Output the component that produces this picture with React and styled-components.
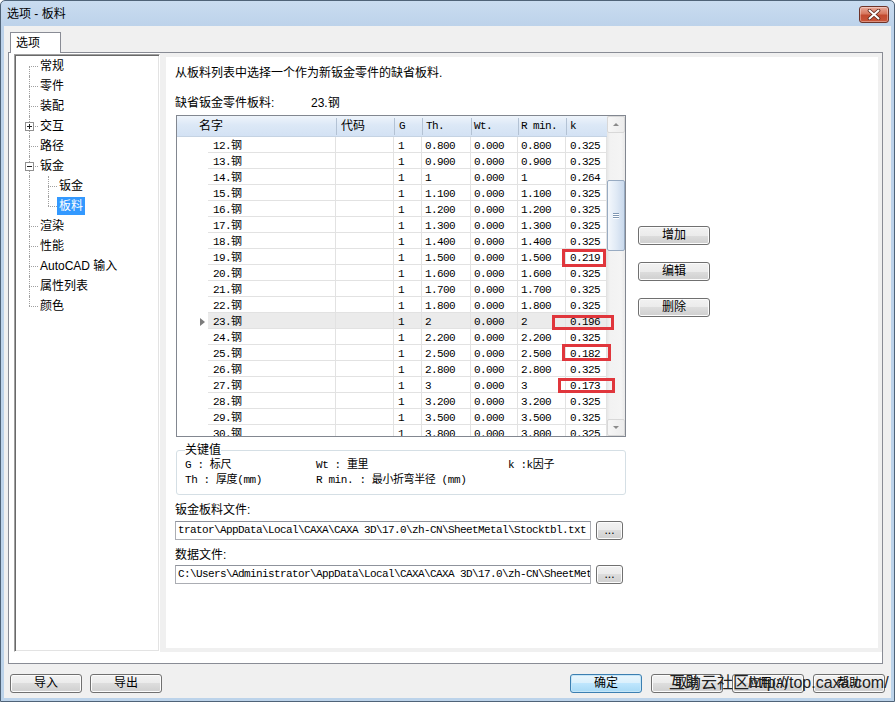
import React from "react";
import styled, { createGlobalStyle, css } from "styled-components";

const UI = `"Liberation Sans", "Noto Sans CJK SC", sans-serif`;
const MONO = `"Liberation Mono", "Noto Sans CJK SC", monospace`;

const GlobalStyle = createGlobalStyle`
  html, body {
    margin: 0;
    padding: 0;
    background: #ffffff;
  }
  body {
    font-family: ${UI};
    font-size: 12px;
    color: #000;
  }
`;

const treeItems = [
  { label: "常规", first: true },
  { label: "零件" },
  { label: "装配" },
  { label: "交互", box: "plus" },
  { label: "路径" },
  { label: "钣金", box: "minus" },
  { label: "钣金", child: true },
  { label: "板料", child: true, lastChild: true, selected: true },
  { label: "渲染" },
  { label: "性能" },
  { label: "AutoCAD 输入" },
  { label: "属性列表" },
  { label: "颜色", last: true },
];

const rows = [
  ["12", "0.800", "0.800", "0.325"],
  ["13", "0.900", "0.900", "0.325"],
  ["14", "1", "1", "0.264"],
  ["15", "1.100", "1.100", "0.325"],
  ["16", "1.200", "1.200", "0.325"],
  ["17", "1.300", "1.300", "0.325"],
  ["18", "1.400", "1.400", "0.325"],
  ["19", "1.500", "1.500", "0.219"],
  ["20", "1.600", "1.600", "0.325"],
  ["21", "1.700", "1.700", "0.325"],
  ["22", "1.800", "1.800", "0.325"],
  ["23", "2", "2", "0.196"],
  ["24", "2.200", "2.200", "0.325"],
  ["25", "2.500", "2.500", "0.182"],
  ["26", "2.800", "2.800", "0.325"],
  ["27", "3", "3", "0.173"],
  ["28", "3.200", "3.200", "0.325"],
  ["29", "3.500", "3.500", "0.325"],
  ["30", "3.800", "3.800", "0.325"],
];

// red annotation boxes drawn over the k column
const marks = [
  { x: 386, y: 134, w: 44, h: 18 },
  { x: 376, y: 200, w: 62, h: 15 },
  { x: 386, y: 229, w: 49, h: 17 },
  { x: 382, y: 263, w: 57, h: 15 },
];

const COLS = "31px 128px 58px 28px 49px 47px 48px 41px";

const Window = styled.div`
  width: 895px;
  height: 702px;
  box-sizing: border-box;
  border: 1px solid #4f6378;
  border-radius: 5px 5px 0 0;
  background: linear-gradient(#c9dcf0, #bcd2ea 26px, #bcd3ea);
  padding: 0 3px 3px;
  display: flex;
  flex-direction: column;
  overflow: hidden;
`;

const TitleBar = styled.div`
  height: 25px;
  flex: none;
  display: flex;
  align-items: center;
  justify-content: space-between;
  padding: 0 2px 0 3px;
`;

const TitleText = styled.div`
  font-family: ${UI};
  font-size: 12px;
  line-height: 16px;
  color: #000;
`;

const CloseButton = styled.div`
  width: 30px;
  height: 17px;
  box-sizing: border-box;
  border: 1px solid #6e3328;
  border-radius: 3px;
  background: linear-gradient(#e9a99a, #d7785f 45%, #c24a30 55%, #c9563a);
  box-shadow: inset 0 0 0 1px rgba(255, 255, 255, 0.35);
  display: flex;
  align-items: center;
  justify-content: center;
  margin-top: 1px;
`;

const Client = styled.div`
  flex: 1;
  background: #f0f0f0;
  display: flex;
  flex-direction: column;
  padding: 5px 6px 0 4px;
`;

const TabStrip = styled.div`
  height: 21px;
  display: flex;
  align-items: flex-end;
  padding-left: 2px;
`;

const Tab = styled.div`
  width: 51px;
  height: 21px;
  box-sizing: border-box;
  border: 1px solid #898c95;
  border-bottom: none;
  background: #ffffff;
  margin-bottom: -1px;
  position: relative;
  z-index: 1;
  font-size: 12px;
  line-height: 20px;
  padding-left: 5px;
`;

const TabPage = styled.div`
  height: 612px;
  box-sizing: border-box;
  margin-right: 2px;
  border: 1px solid #898c95;
  background: #ffffff;
  display: flex;
  padding: 0 0 11px 5px;
`;

const Tree = styled.div`
  width: 146px;
  flex: none;
  box-sizing: border-box;
  margin-top: 1px;
  border: 1px solid;
  border-color: #a0a0a0 #ffffff #ffffff #a0a0a0;
  box-shadow: inset 1px 1px 0 #696969, inset -1px -1px 0 #e3e3e3;
  padding: 1px 0 0 1px;
  background: #fff;
`;

const TreeRow = styled.div`
  height: 20px;
  display: flex;
  align-items: center;
`;

const dotted = css`
  content: "";
  position: absolute;
  border-color: #a0a0a0;
`;

const Connector = styled.span`
  position: relative;
  flex: none;
  width: 22px;
  height: 20px;
  &::before {
    ${dotted};
    left: 13px;
    top: ${p => (p.$first ? "10px" : "0")};
    bottom: ${p => (p.$last ? "10px" : "0")};
    border-left: 1px dotted #a0a0a0;
  }
  &::after {
    ${dotted};
    left: 13px;
    top: 10px;
    width: 9px;
    border-top: 1px dotted #a0a0a0;
  }
`;

const Pipe = styled.span`
  position: relative;
  flex: none;
  width: 19px;
  height: 20px;
  &::before {
    ${dotted};
    left: 13px;
    top: 0;
    bottom: 0;
    border-left: 1px dotted #a0a0a0;
  }
`;

const Expander = styled.span`
  position: absolute;
  left: 9px;
  top: 6px;
  width: 7px;
  height: 7px;
  border: 1px solid #919191;
  z-index: 1;
  background: ${p =>
    p.$plus
      ? "linear-gradient(#222,#222) center / 5px 1px no-repeat, linear-gradient(#222,#222) center / 1px 5px no-repeat, #fff"
      : "linear-gradient(#222,#222) center / 5px 1px no-repeat, #fff"};
`;

const TreeLabel = styled.span`
  font-family: ${UI};
  font-size: 12px;
  line-height: 18px;
  padding: 0 2px;
  white-space: nowrap;
  color: ${p => (p.$selected ? "#fff" : "#000")};
  background: ${p => (p.$selected ? "#3399ff" : "transparent")};
`;

const Panel = styled.div`
  flex: 1;
  border: 4px solid #f0f0f0;
  border-left-width: 6px;
  background: #fff;
`;

const PanelContent = styled.div`
  padding: 8px 0 0 9px;
  display: flex;
  flex-direction: column;
`;

const Line = styled.div`
  font-size: 12px;
  line-height: 16px;
  height: 16px;
  white-space: nowrap;
  margin-top: ${p => p.$mt || 0}px;
`;

const DefaultRow = styled(Line)`
  display: flex;
`;

const DefaultLabel = styled.span`
  width: 136px;
`;

const MainRow = styled.div`
  display: flex;
  margin-top: 4px;
`;

const TableCol = styled.div`
  width: 450px;
  margin-left: 1px;
  display: flex;
  flex-direction: column;
`;

const TableWrap = styled.div`
  position: relative;
`;

const Table = styled.div`
  height: 322px;
  box-sizing: border-box;
  border: 1px solid #828790;
  display: flex;
  background: #fff;
`;

const Grid = styled.div`
  width: 430px;
  height: 320px;
  overflow: hidden;
`;

const HeaderRow = styled.div`
  display: grid;
  grid-template-columns: ${COLS};
  height: 21px;
  box-sizing: border-box;
  border-bottom: 1px solid #c5d3e3;
  background: linear-gradient(#eef4fb, #dce8f6 45%, #d3e2f4);
`;

const HeadCell = styled.div`
  font-family: ${p => (p.$mono ? MONO : UI)};
  font-size: ${p => (p.$mono ? "11px" : "12px")};
  letter-spacing: ${p => (p.$mono ? "-0.6px" : "0")};
  padding-left: ${p => p.$pad || 4}px;
  white-space: nowrap;
  grid-column: ${p => (p.$span ? "span 2" : "auto")};
  border-left: ${p => (p.$sep ? "1px solid #b3c2d4" : "none")};
  margin: 2px 0;
  line-height: 17px;
`;

const DataRow = styled.div`
  display: grid;
  grid-template-columns: ${COLS};
  height: 16px;
  background: ${p => (p.$current ? "#ebebeb" : "#fff")};
`;

const Indicator = styled.div`
  background: #fff;
  display: flex;
  align-items: center;
  justify-content: flex-end;
  padding-right: 3px;
`;

const Arrow = styled.span`
  width: 0;
  height: 0;
  margin-top: 1px;
  border-left: 5px solid #7c7c7c;
  border-top: 4px solid transparent;
  border-bottom: 4px solid transparent;
`;

const Cell = styled.div`
  font-family: ${MONO};
  font-size: 11px;
  letter-spacing: -0.6px;
  height: 16px;
  line-height: 12px;
  padding-top: 3px;
  box-sizing: border-box;
  border-right: 1px solid #e2e2e2;
  border-bottom: 1px solid #e2e2e2;
  padding-left: ${p => p.$pad || 4}px;
  white-space: nowrap;
  overflow: hidden;
`;

const ScrollBar = styled.div`
  width: 18px;
  height: 320px;
  display: flex;
  flex-direction: column;
  background: linear-gradient(90deg, #e6e6e6, #f2f2f2 3px, #f4f4f4 14px, #e9e9e9);
`;

const ScrollArrow = styled.div`
  height: 17px;
  flex: none;
  box-sizing: border-box;
  border: 1px solid #d8d8d8;
  border-radius: 2px;
  background: linear-gradient(90deg, #f6f6f6, #ececec);
  display: flex;
  align-items: center;
  justify-content: center;
  &::after {
    content: "";
    width: 0;
    height: 0;
    border-left: 3px solid transparent;
    border-right: 3px solid transparent;
    ${p =>
      p.$down
        ? "border-top: 3px solid #8a8a8a;"
        : "border-bottom: 3px solid #8a8a8a;"}
  }
`;

const Track = styled.div`
  flex: 1;
  padding-top: 47px;
`;

const Thumb = styled.div`
  height: 71px;
  box-sizing: border-box;
  border: 1px solid #98abc2;
  border-radius: 2px;
  background: linear-gradient(90deg, #f4f8fc, #dfe9f5 55%, #c9d9ec);
  display: flex;
  flex-direction: column;
  align-items: center;
  justify-content: center;
  gap: 1px;
`;

const Grip = styled.span`
  width: 6px;
  height: 1px;
  background: #7f97b3;
  box-shadow: 0 1px 0 #fff;
`;

const Mark = styled.div`
  position: absolute;
  left: ${p => p.$x}px;
  top: ${p => p.$y}px;
  width: ${p => p.$w}px;
  height: ${p => p.$h}px;
  box-sizing: border-box;
  border: 3px solid #e0363c;
  pointer-events: none;
`;

const KeyGroup = styled.fieldset`
  margin: 5px 0 0;
  padding: 0 8px 6px;
  min-width: 0;
  box-sizing: border-box;
  width: 450px;
  border: 1px solid #d5dfe5;
  border-radius: 3px;
  display: grid;
  grid-template-columns: 131px 192px 1fr;
`;

const KeyTitle = styled.legend`
  padding: 0;
  font-size: 12px;
  line-height: 16px;
`;

const KeyItem = styled.div`
  font-family: ${MONO};
  font-size: 11px;
  letter-spacing: -0.4px;
  line-height: 15px;
  white-space: nowrap;
`;

const SideButtons = styled.div`
  display: flex;
  flex-direction: column;
  gap: 17px;
  margin-left: 12px;
  padding-top: 111px;
`;

const Button = styled.div`
  width: ${p => p.$w || 72}px;
  height: 19px;
  box-sizing: border-box;
  flex: none;
  border: 1px solid ${p => (p.$default ? "#3c7fb1" : "#707070")};
  border-radius: 3px;
  background: ${p =>
    p.$default
      ? "linear-gradient(#eaf6fd, #d9f0fc 50%, #bee6fd 50%, #a7d9f5)"
      : "linear-gradient(#f2f2f2, #ebebeb 50%, #dddddd 50%, #cfcfcf)"};
  box-shadow: inset 0 0 0 1px ${p => (p.$default ? "#c5e6f8" : "#fcfcfc")};
  font-family: ${UI};
  font-size: 12px;
  line-height: 17px;
  text-align: center;
  color: #000;
  white-space: nowrap;
`;

const FileRow = styled.div`
  display: flex;
  align-items: center;
  gap: 5px;
  margin-top: ${p => p.$mt}px;
`;

const Field = styled.div`
  width: 416px;
  height: 19px;
  box-sizing: border-box;
  border: 1px solid #abadb3;
  border-top-color: #8f939c;
  padding: 0 2px;
  font-family: ${MONO};
  font-size: 11px;
  letter-spacing: -0.6px;
  line-height: 17px;
  white-space: nowrap;
  overflow: hidden;
`;

const BottomBar = styled.div`
  position: relative;
  display: flex;
  align-items: center;
  margin-top: 10px;
  padding-left: 2px;
  gap: 8px;
`;

const Spacer = styled.div`
  flex: 1;
`;

const DialogButtons = styled.div`
  display: flex;
  gap: 9px;
`;

const Watermark = styled.div`
  position: absolute;
  left: 661px;
  top: -2px;
  font-family: ${UI};
  font-size: 16px;
  line-height: 22px;
  color: #222;
  white-space: nowrap;
  pointer-events: none;
`;

function TreeView() {
  return (
    <Tree>
      {treeItems.map((it, i) => (
        <TreeRow key={i}>
          {it.child ? (
            <>
              <Pipe />
              <Connector $last={it.lastChild} />
            </>
          ) : (
            <Connector $first={it.first} $last={it.last}>
              {it.box && <Expander $plus={it.box === "plus"} />}
            </Connector>
          )}
          <TreeLabel $selected={it.selected}>{it.label}</TreeLabel>
        </TreeRow>
      ))}
    </Tree>
  );
}

function StockTable() {
  return (
    <TableWrap>
      <Table>
        <Grid>
          <HeaderRow>
            <HeadCell $span $pad={22}>名字</HeadCell>
            <HeadCell $sep>代码</HeadCell>
            <HeadCell $sep $mono $pad={4}>G</HeadCell>
            <HeadCell $sep $mono $pad={3}>Th.</HeadCell>
            <HeadCell $sep $mono $pad={2}>Wt.</HeadCell>
            <HeadCell $sep $mono $pad={2}>R min.</HeadCell>
            <HeadCell $sep $mono $pad={3}>k</HeadCell>
          </HeaderRow>
          {rows.map(([n, th, rmin, k]) => (
            <DataRow key={n} $current={n === "23"}>
              <Indicator>{n === "23" && <Arrow />}</Indicator>
              <Cell $pad={5}>{n}.钢</Cell>
              <Cell />
              <Cell $pad={4}>1</Cell>
              <Cell $pad={3}>{th}</Cell>
              <Cell $pad={3}>0.000</Cell>
              <Cell $pad={3}>{rmin}</Cell>
              <Cell $pad={4}>{k}</Cell>
            </DataRow>
          ))}
        </Grid>
        <ScrollBar>
          <ScrollArrow />
          <Track>
            <Thumb>
              <Grip />
              <Grip />
              <Grip />
            </Thumb>
          </Track>
          <ScrollArrow $down />
        </ScrollBar>
      </Table>
      {marks.map((m, i) => (
        <Mark key={i} $x={m.x} $y={m.y} $w={m.w} $h={m.h} />
      ))}
    </TableWrap>
  );
}

export default function App() {
  return (
    <>
      <GlobalStyle />
      <Window>
        <TitleBar>
          <TitleText>选项 - 板料</TitleText>
          <CloseButton>
            <svg width="14" height="11" viewBox="0 0 14 11">
              <path d="M2.5 1.5 L11.5 9.5 M11.5 1.5 L2.5 9.5" stroke="#5a2418" strokeWidth="3.6" strokeLinecap="round" />
              <path d="M2.5 1.5 L11.5 9.5 M11.5 1.5 L2.5 9.5" stroke="#ffffff" strokeWidth="2" strokeLinecap="round" />
            </svg>
          </CloseButton>
        </TitleBar>
        <Client>
          <TabStrip>
            <Tab>选项</Tab>
          </TabStrip>
          <TabPage>
            <TreeView />
            <Panel>
              <PanelContent>
                <Line>从板料列表中选择一个作为新钣金零件的缺省板料.</Line>
                <DefaultRow $mt={14}>
                  <DefaultLabel>缺省钣金零件板料:</DefaultLabel>
                  <span>23.钢</span>
                </DefaultRow>
                <MainRow>
                  <TableCol>
                    <StockTable />
                    <KeyGroup>
                      <KeyTitle>关键值</KeyTitle>
                      <KeyItem>G : 标尺</KeyItem>
                      <KeyItem>Wt : 重里</KeyItem>
                      <KeyItem>k :k因子</KeyItem>
                      <KeyItem>Th : 厚度(mm)</KeyItem>
                      <KeyItem>R min. : 最小折弯半径 (mm)</KeyItem>
                    </KeyGroup>
                  </TableCol>
                  <SideButtons>
                    <Button>增加</Button>
                    <Button>编辑</Button>
                    <Button>删除</Button>
                  </SideButtons>
                </MainRow>
                <Line $mt={7}>钣金板料文件:</Line>
                <FileRow $mt={3}>
                  <Field>trator\AppData\Local\CAXA\CAXA 3D\17.0\zh-CN\SheetMetal\Stocktbl.txt</Field>
                  <Button $w={27}>...</Button>
                </FileRow>
                <Line $mt={7}>数据文件:</Line>
                <FileRow $mt={2}>
                  <Field>C:\Users\Administrator\AppData\Local\CAXA\CAXA 3D\17.0\zh-CN\SheetMetal\Stocktbl.txt</Field>
                  <Button $w={27}>...</Button>
                </FileRow>
              </PanelContent>
            </Panel>
          </TabPage>
          <BottomBar>
            <Button>导入</Button>
            <Button>导出</Button>
            <Spacer />
            <DialogButtons>
              <Button $default>确定</Button>
              <Button>取消</Button>
              <Button>应用(A)</Button>
              <Button>帮助</Button>
            </DialogButtons>
            <Watermark>互助云社区http://top.caxa.com/</Watermark>
          </BottomBar>
        </Client>
      </Window>
    </>
  );
}
